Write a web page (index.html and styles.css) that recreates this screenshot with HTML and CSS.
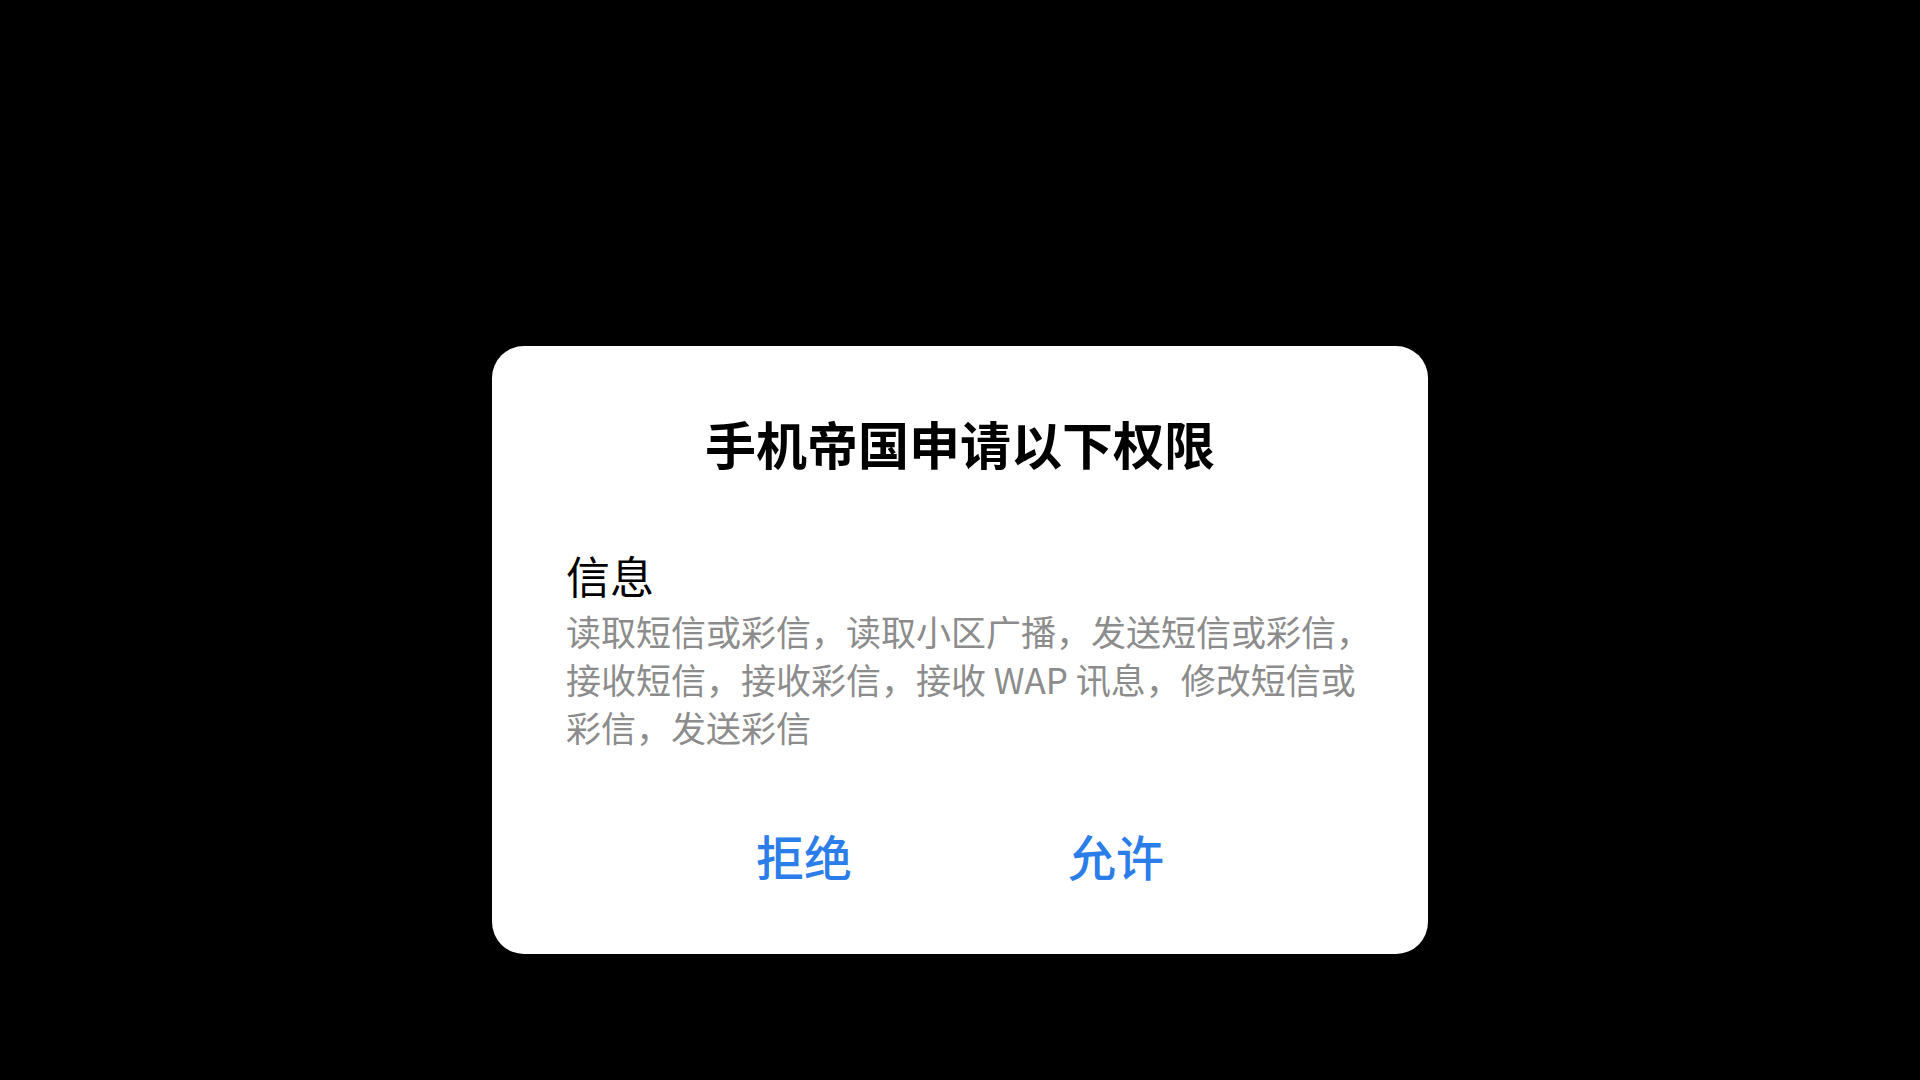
FILE: index.html
```html
<!DOCTYPE html>
<html lang="zh-CN">
<head>
  <meta charset="UTF-8">
  <meta name="viewport" content="width=device-width, initial-scale=1.0">
  <title>权限申请</title>
  <link rel="stylesheet" href="styles.css">
</head>
<body>
  <div class="dialog">
    <h1 class="dialog-title">手机帝国申请以下权限</h1>
    <div class="perm-group">
      <div class="perm-name">信息</div>
      <div class="perm-desc">读取短信或彩信，读取小区广播，发送短信或彩信，接收短信，接收彩信，接收 WAP 讯息，修改短信或彩信，发送彩信</div>
    </div>
    <div class="dialog-actions">
      <button class="action-btn">拒绝</button>
      <button class="action-btn">允许</button>
    </div>
  </div>
</body>
</html>
```

FILE: styles.css
```css
html, body {
  height: 100%;
}

body {
  margin: 0;
  background: #000;
  font-family: "Noto Sans CJK SC", "Noto Sans", sans-serif;
  display: flex;
  flex-direction: column;
  justify-content: flex-end;
  align-items: center;
  padding-bottom: 126px;
  box-sizing: border-box;
  overflow: hidden;
}

.dialog {
  width: 936px;
  box-sizing: border-box;
  background: #fff;
  border-radius: 32px;
  padding: 67px 52px 69px 74px;
}

/* content box is offset to the right, so pull centred items back */
.dialog-title {
  margin: 0;
  text-align: center;
  font-size: 51px;
  line-height: 60px;
  font-weight: 700;
  color: #000;
  padding-right: 22px;
}

.perm-group {
  margin-top: 74px;
}

.perm-name {
  font-size: 44px;
  line-height: 56px;
  color: #000;
}

.perm-desc {
  margin-top: 4px;
  font-size: 35px;
  line-height: 48px;
  color: #8c8c8c;
}

.dialog-actions {
  display: flex;
  margin: 74px 104px 0 82px;
}

.action-btn {
  flex: 1;
  border: none;
  background: none;
  padding: 0;
  font-family: inherit;
  font-size: 48px;
  line-height: 60px;
  font-weight: 500;
  color: #2b7de9;
  cursor: pointer;
}
```
